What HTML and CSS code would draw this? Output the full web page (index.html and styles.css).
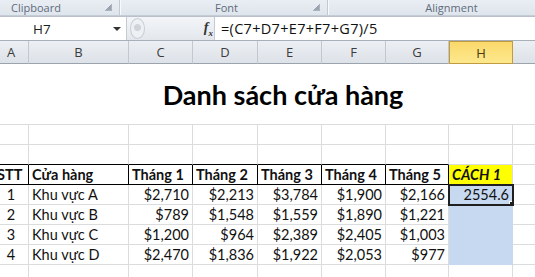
FILE: index.html
```html
<!DOCTYPE html>
<html lang="vi">
<head>
  <meta charset="UTF-8" />
  <title>Danh sách cửa hàng</title>
  <link rel="stylesheet" href="styles.css">
</head>
<body>
  <div class="ribbon">
    <div class="group g-clip"><span>Clipboard</span><i class="launcher"></i></div>
    <div class="group g-font"><span>Font</span><i class="launcher"></i></div>
    <div class="group g-align"><span>Alignment</span></div>
  </div>

  <div class="fbar">
    <div class="namebox"><span>H7</span><i class="caret"></i></div>
    <div class="fbtns"><i class="knob"></i><span class="fx"><i>f</i><sub>x</sub></span></div>
    <div class="formula">=(C7+D7+E7+F7+G7)/5</div>
  </div>

  <div class="sheet">
    <!-- column headers -->
    <div class="ch">A</div><div class="ch">B</div><div class="ch">C</div><div class="ch">D</div>
    <div class="ch">E</div><div class="ch">F</div><div class="ch">G</div><div class="ch sel">H</div>
    <div class="ch"></div>

    <!-- title row -->
    <div class="c title">Danh sách cửa hàng</div>

    <!-- blank rows -->
    <div class="c"></div><div class="c"></div><div class="c"></div><div class="c"></div><div class="c"></div>
    <div class="c"></div><div class="c"></div><div class="c"></div><div class="c"></div>
    <div class="c above"></div><div class="c above"></div><div class="c above"></div><div class="c above"></div><div class="c above"></div>
    <div class="c above"></div><div class="c above"></div><div class="c"></div><div class="c"></div>

    <!-- table header -->
    <div class="c th">STT</div>
    <div class="c th">Cửa hàng</div>
    <div class="c th">Tháng 1</div>
    <div class="c th">Tháng 2</div>
    <div class="c th">Tháng 3</div>
    <div class="c th">Tháng 4</div>
    <div class="c th">Tháng 5</div>
    <div class="c cach">CÁCH 1</div>
    <div class="c"></div>

    <div class="c mid">1</div><div class="c">Khu vực A</div>
    <div class="c num">$2,710</div><div class="c num">$2,213</div><div class="c num">$3,784</div>
    <div class="c num">$1,900</div><div class="c num">$2,166</div>
    <div class="c num pick active">2554.6</div><div class="c"></div>

    <div class="c mid">2</div><div class="c">Khu vực B</div>
    <div class="c num">$789</div><div class="c num">$1,548</div><div class="c num">$1,559</div>
    <div class="c num">$1,890</div><div class="c num">$1,221</div>
    <div class="c pick"></div><div class="c"></div>

    <div class="c mid">3</div><div class="c">Khu vực C</div>
    <div class="c num">$1,200</div><div class="c num">$964</div><div class="c num">$2,389</div>
    <div class="c num">$2,405</div><div class="c num">$1,003</div>
    <div class="c pick"></div><div class="c"></div>

    <div class="c mid">4</div><div class="c">Khu vực D</div>
    <div class="c num">$2,470</div><div class="c num">$1,836</div><div class="c num">$1,922</div>
    <div class="c num">$2,053</div><div class="c num">$977</div>
    <div class="c pick"></div><div class="c"></div>

    <div class="c"></div><div class="c"></div><div class="c"></div><div class="c"></div><div class="c"></div>
    <div class="c"></div><div class="c"></div><div class="c"></div><div class="c"></div>
  </div>
</body>
</html>
```

FILE: styles.css
```css
body {
  margin: 0;
  width: 535px;
  height: 277px;
  overflow: hidden;
  background: #fff;
  font-family: Lato, "Noto Sans", sans-serif;
}

/* ribbon group labels */
.ribbon {
  display: flex;
  height: 15px;
  background: linear-gradient(#e9eef4, #dfe5ec);
  border-bottom: 1px solid #c6ccd4;
}

.group {
  position: relative;
  display: flex;
  align-items: center;
  justify-content: center;
  border-right: 1px solid #c3c9d1;
  box-shadow: 1px 0 0 #f7f9fb;
  font-family: "Open Sans", sans-serif;
  font-size: 11px;
  color: #5f6b79;
}

.g-clip { width: 120px; justify-content: flex-start; padding-left: 11px; box-sizing: border-box; }
.g-font { width: 208px; padding-left: 6px; box-sizing: border-box; }
.g-align { flex: 1; border-right: none; box-shadow: none; padding-left: 40px; }

.launcher {
  position: absolute;
  right: 7px;
  top: 4px;
  width: 6px;
  height: 6px;
  border: 1px solid #aab2bd;
  border-width: 0 1px 1px 0;
  background: linear-gradient(135deg, transparent 55%, #9aa3ae 55%);
}

/* formula bar */
.fbar {
  display: flex;
  height: 23px;
  border-top: 1px solid #b9c0c9;
  border-bottom: 1px solid #a7afb9;
  background: linear-gradient(#f3f5f8, #e3e7ec);
}

.namebox {
  position: relative;
  width: 127px;
  background: #fff;
  border-right: 1px solid #c5cbd3;
  font-family: "Open Sans", sans-serif;
  font-size: 13.5px;
  color: #1e1e1e;
  display: flex;
  align-items: center;
  padding-left: 33px;
  box-sizing: border-box;
}

.caret {
  position: absolute;
  right: 5px;
  top: 10px;
  border: 4px solid transparent;
  border-top: 4px solid #333;
  border-bottom: 0;
}

.fbtns {
  width: 87px;
  display: flex;
  align-items: center;
  justify-content: space-between;
  padding: 0 1px 0 3px;
  box-sizing: border-box;
}

.knob {
  width: 13px;
  height: 19px;
  border-radius: 50%;
  border: 1px solid #c8ced6;
  background: radial-gradient(circle at 50% 45%, #cfd4da 0 3px, #eef1f4 4px);
}

.fx {
  font-family: "Liberation Serif", serif;
  font-weight: bold;
  font-size: 14px;
  color: #333;
}
.fx sub { font-size: 9px; font-style: italic; }

.formula {
  flex: 1;
  background: #fff;
  border-left: 1px solid #c5cbd3;
  font-family: "Open Sans", sans-serif;
  font-size: 14.5px;
  letter-spacing: 0.3px;
  color: #111;
  display: flex;
  align-items: center;
  padding-left: 6px;
}

/* worksheet grid */
.sheet {
  display: grid;
  grid-template-columns: 35px 100px 64px 65px 64px 64px 63px 64px 64px;
  grid-template-rows: 23px 61px repeat(9, 20px);
  margin-left: -6px;
  font-size: 14.5px;
  color: #111;
}

.ch {
  display: flex;
  align-items: center;
  justify-content: center;
  background: linear-gradient(#eceff3, #dde2e8);
  border-right: 1px solid #c2c8d0;
  border-bottom: 1px solid #9ba3ad;
  font-family: "Open Sans", sans-serif;
  font-size: 13px;
  color: #3c3c3c;
}

.ch.sel {
  background: linear-gradient(#fbd96b, #fde88e);
  border: 1px solid #c29b3f;
  color: #4a3a10;
}

.c {
  border-right: 1px solid #dadcdd;
  border-bottom: 1px solid #dadcdd;
  padding: 0 3px;
  line-height: 19px;
  white-space: nowrap;
  overflow: hidden;
}

.title {
  grid-column: 1 / -1;
  text-align: center;
  font-size: 27px;
  font-weight: bold;
  line-height: 61px;
  color: #000;
  border-right: none;
  padding-right: 8px;
}

.above { border-bottom-color: #000; }

.th {
  font-weight: bold;
  border-right-color: #000;
  border-bottom-color: #000;
}

.cach {
  background: #ffff00;
  font-weight: bold;
  font-style: italic;
  border-bottom-color: #000;
}

.mid { text-align: center; }
.num { text-align: right; }

.pick {
  background: #c6d9f0;
  border-right-color: #c6d9f0;
  border-bottom-color: #c6d9f0;
}

.active {
  position: relative;
  outline: 2px solid #1f1f1f;
  outline-offset: -1px;
}

.active::after {
  content: "";
  position: absolute;
  right: -3px;
  bottom: -3px;
  width: 5px;
  height: 5px;
  background: #1f1f1f;
  border: 1px solid #fff;
  border-width: 1px 0 0 1px;
}
```
